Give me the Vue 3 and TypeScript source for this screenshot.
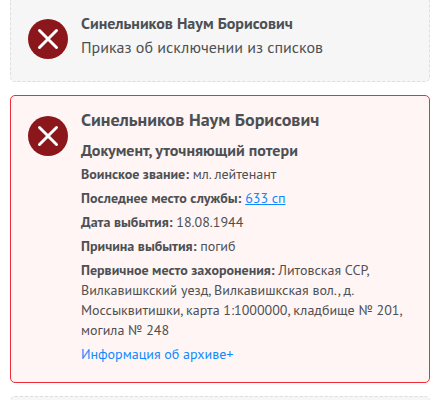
<script setup lang="ts">
interface Field {
  label: string
  value: string
  link?: boolean
}

const fields: Field[] = [
  { label: 'Воинское звание:', value: 'мл. лейтенант' },
  { label: 'Последнее место службы:', value: '633 сп', link: true },
  { label: 'Дата выбытия:', value: '18.08.1944' },
  { label: 'Причина выбытия:', value: 'погиб' },
]
</script>

<template>
  <main class="list">
    <article class="card card-top">
      <svg class="mark" viewBox="0 0 40 40"><circle cx="20" cy="20" r="20" /><path d="M11.5 11.5 28.5 28.5M28.5 11.5 11.5 28.5" /></svg>
      <div class="body">
        <div class="name-small">Синельников Наум Борисович</div>
        <div class="kind">Приказ об исключении из списков</div>
      </div>
    </article>

    <article class="card card-active">
      <svg class="mark" viewBox="0 0 40 40"><circle cx="20" cy="20" r="20" /><path d="M11.5 11.5 28.5 28.5M28.5 11.5 11.5 28.5" /></svg>
      <div class="body">
        <div class="name">Синельников Наум Борисович</div>
        <div class="doc">Документ, уточняющий потери</div>
        <div v-for="f in fields" :key="f.label" class="row">
          <b>{{ f.label }}</b>{{ ' ' }}<a v-if="f.link" class="link">{{ f.value }}</a><span v-else>{{ f.value }}</span>
        </div>
        <div class="row">
          <b>Первичное место захоронения:</b> Литовская ССР,<br>
          Вилкавишкский уезд, Вилкавишкская вол., д.<br>
          Моссыквитишки, карта 1:1000000, кладбище № 201,<br>
          могила № 248
        </div>
        <div class="row archive">Информация об архиве+</div>
      </div>
    </article>

    <article class="card card-next"></article>
  </main>
</template>

<style>
body {
  background: #fff;
  overflow: hidden;
}
</style>

<style scoped>
.list {
  width: 420px;
  height: 400px;
  margin-left: 10px;
  overflow: hidden;
  display: flex;
  flex-direction: column;
  gap: 13px;
  font-family: "PT Sans", "Noto Sans", sans-serif;
  color: #4d5053;
  white-space: nowrap;
}
.card {
  box-sizing: border-box;
  flex: none;
  display: flex;
  gap: 13px;
  padding: 20px 17px;
  border: 1px dashed #dedede;
  border-radius: 5px;
  background: #f6f6f6;
}
.card-top {
  height: 82px;
  padding-top: 19px;
  border-top: 0;
  border-radius: 0 0 5px 5px;
}
.card-active {
  height: 288px;
  border: 1px solid #ee2d38;
  background: #fff5f4;
}
.card-next {
  height: 82px;
}
.mark {
  flex: none;
  width: 40px;
  height: 40px;
}
.mark circle {
  fill: #8b171c;
}
.mark path {
  fill: none;
  stroke: #fff;
  stroke-width: 3;
  stroke-linecap: round;
}
.name-small {
  margin-top: -8px;
  line-height: 24px;
  font-size: 16px;
  font-weight: 700;
}
.kind {
  line-height: 24px;
  font-size: 16px;
}
.name {
  margin-top: -8px;
  line-height: 24px;
  font-size: 18px;
  font-weight: 700;
}
.doc {
  margin-top: 6px;
  line-height: 24px;
  font-size: 16px;
  font-weight: 700;
}
.row {
  margin-bottom: 4px;
  line-height: 20px;
  font-size: 14px;
}
.doc + .row {
  margin-top: 2px;
}
.link {
  color: #0d8bff;
  text-decoration: underline;
}
.archive {
  color: #0d8bff;
}
</style>
